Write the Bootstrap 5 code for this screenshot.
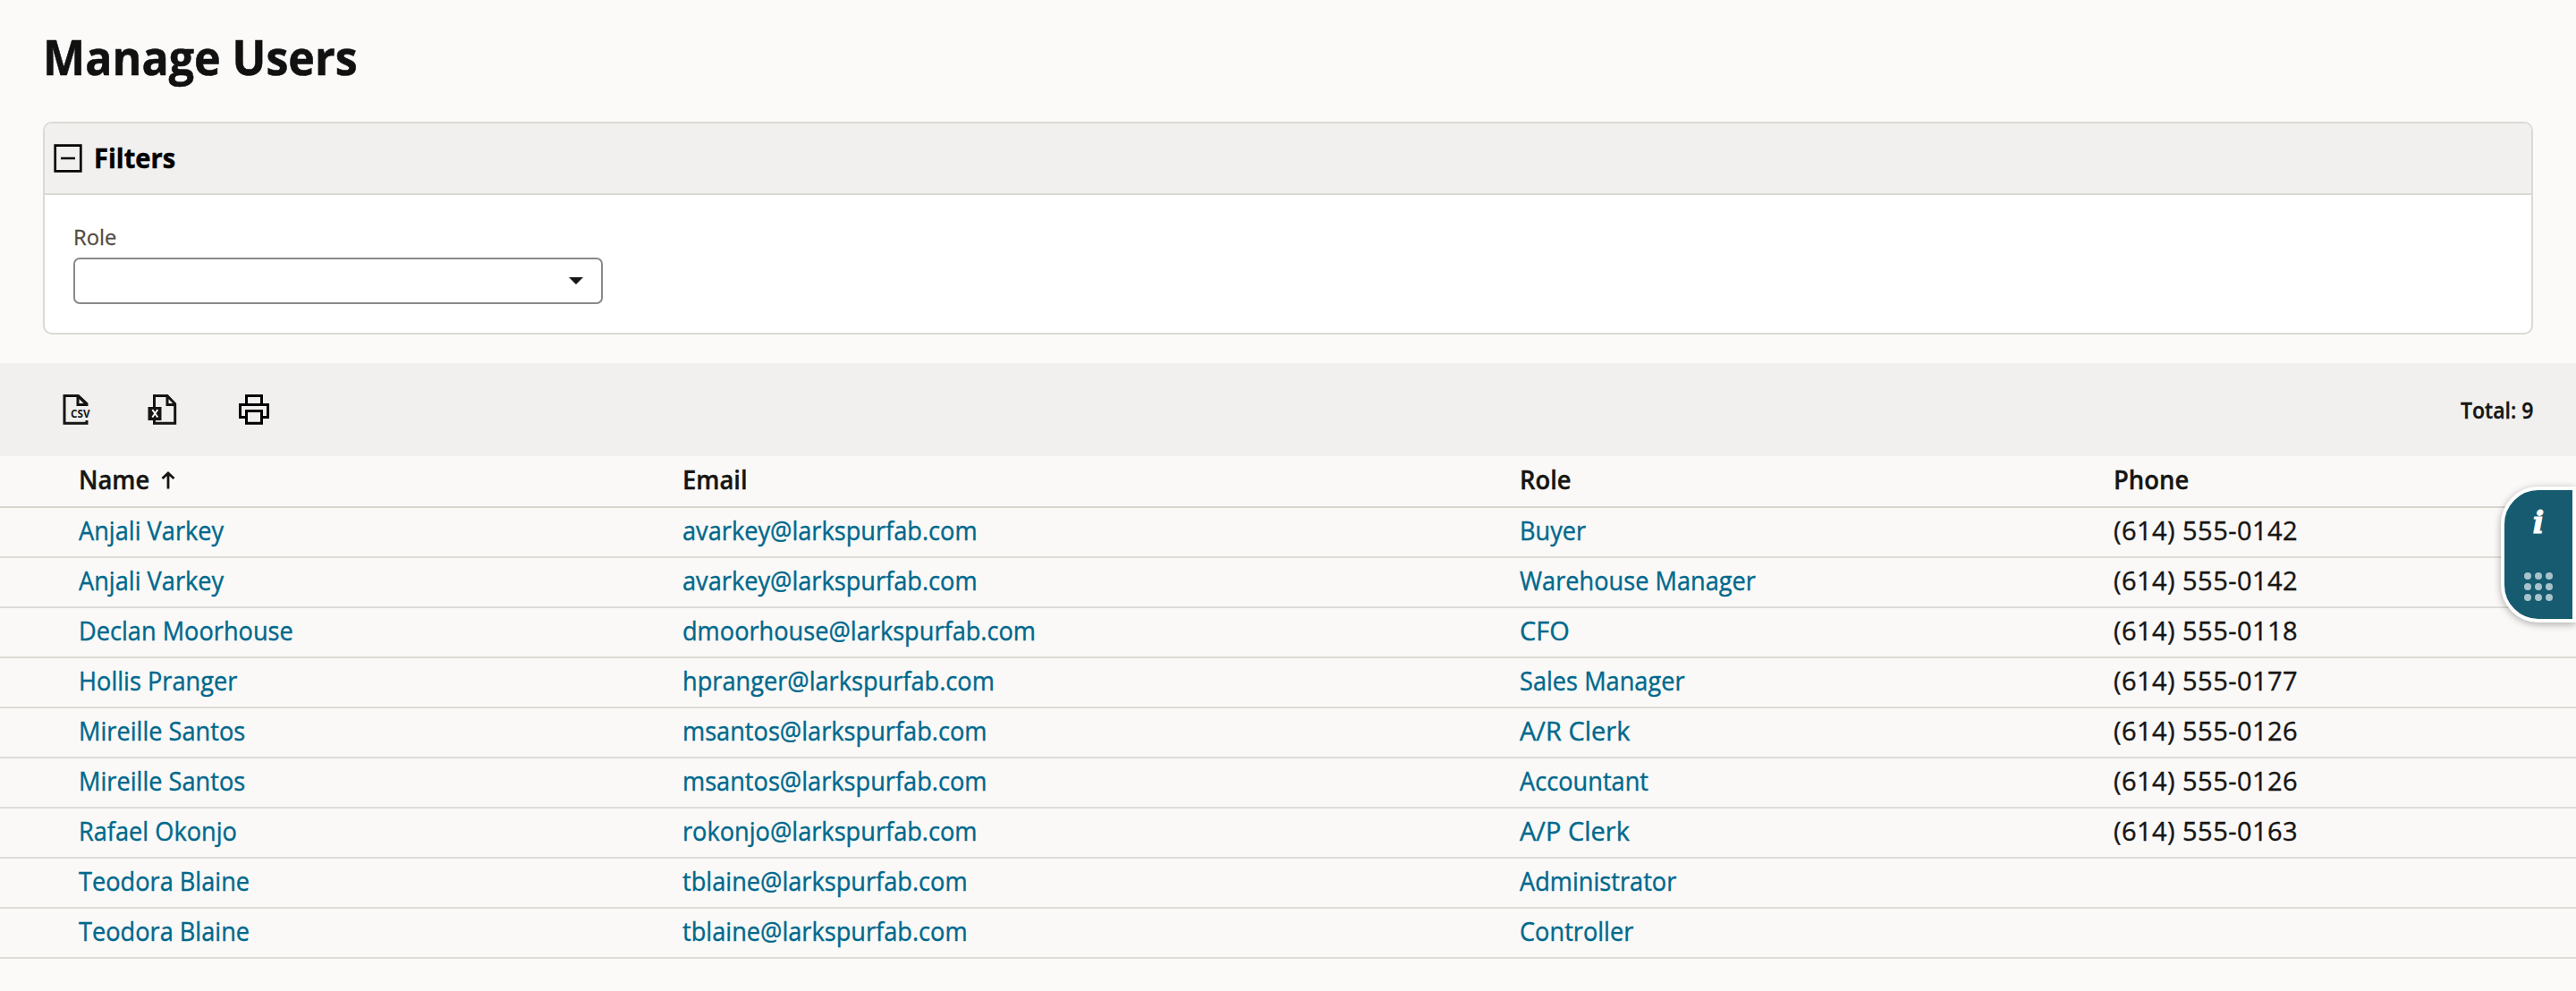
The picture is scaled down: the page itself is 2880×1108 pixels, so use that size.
<!DOCTYPE html>
<html lang="en">
<head>
<meta charset="utf-8">
<title>Manage Users</title>
<link rel="stylesheet" href="https://cdn.jsdelivr.net/npm/bootstrap@5.3.0/dist/css/bootstrap.min.css">
<style>
body{background:#fbfaf8;color:#161513;font-family:"Open Sans","Noto Sans",sans-serif;font-size:29px;overflow:hidden}
/* slightly condensed text */
.narrow{display:inline-block;transform:scaleX(var(--w,.937));transform-origin:left center}
.w-full{--w:1}
.page-title{font-size:54.5px;font-weight:700;line-height:64px;padding:31px 48px 0;height:136px;color:#111;--w:.919;-webkit-text-stroke:.6px #111}
.filter-card{margin:0 48px;height:238px;border:2px solid #dbd9d4;border-radius:10px;background:#fff;overflow:hidden}
.filter-head{height:80px;background:#f1f0ee;border-bottom:2px solid #dbd9d4;padding-left:10px;gap:13px;color:#000;font-weight:700;font-size:31px;-webkit-text-stroke:.5px #000}
.filter-head .narrow{padding-bottom:2px}
.filter-body{padding:30px 32px 0}
.filter-label{font-size:24.5px;line-height:34px;color:#4f4b46;display:block;margin-bottom:6px;--w:.97;-webkit-text-stroke:.3px #4f4b46}
.role-select{width:592px;height:52px;border:2px solid #8b8988;border-radius:7px;background:#fff;padding:0 20px}
.toolbar{height:104px;margin-top:32px;background:#f1f0ee;padding:0 48px}
.total-count{font-size:25px;font-weight:600;--w:.92;transform-origin:right center;padding-top:2px;-webkit-text-stroke:.4px #161513}
.user-table{table-layout:fixed;width:100%;background:#faf9f8;border-collapse:separate;border-spacing:0;-webkit-text-stroke:.4px}
.user-table th,.user-table td{padding:0 0 5px;height:56px;line-height:40px;border-bottom:2px solid #dddcd6;vertical-align:middle;white-space:nowrap}
.user-table th{height:58px;padding-bottom:4px;font-weight:600;border-color:#d6d5cd}
.user-table th:first-child,.user-table td:first-child{padding-left:88px}
.user-table a{color:#00688c;text-decoration:none}
.user-table td.phone-cell{letter-spacing:.45px}
.user-table thead .narrow{--w:.945}
.sort-arrow{vertical-align:baseline;margin-left:8px}
.side-tab{right:0;top:544px;width:84px;height:152px;background:#165b70;border:4px solid #fff;border-radius:42px 0 0 42px;box-shadow:0 2px 8px rgba(0,0,0,.32)}
.info-glyph{font:italic 700 34px/40px "DejaVu Serif",serif;color:#fff;margin-top:16px;-webkit-text-stroke:.8px #fff}
.dot-grid{margin-bottom:20px}
</style>
</head>
<body>
<h1 class="page-title mb-0"><span class="narrow">Manage Users</span></h1>
<section class="filter-card">
  <div class="filter-head d-flex align-items-center">
    <svg width="32" height="32" viewBox="0 0 32 32" fill="none" stroke="#000" stroke-width="2.7"><path d="M1.7 1.7h28.6v28.6H1.7zM8 16h16"/></svg>
    <span class="narrow">Filters</span>
  </div>
  <div class="filter-body">
    <label class="filter-label"><span class="narrow">Role</span></label>
    <div class="role-select d-flex align-items-center justify-content-end"><svg width="16" height="8"><path d="M0 0h16L8 8z" fill="#161513"/></svg></div>
  </div>
</section>
<div class="toolbar d-flex align-items-center justify-content-between">
  <svg width="280" height="40" viewBox="48 438 280 40" fill="none" stroke="#161513" stroke-width="3">
    <path d="M97 454v-2.500L87.500 442.500H72V473.300H97V470M87 442v10.500H97M87 442.500l10 10"/>
    <text x="79" y="466.500" font-family="Open Sans" font-size="11.500" font-weight="700" fill="#161513" stroke="none" textLength="21.500" lengthAdjust="spacingAndGlyphs">CSV</text>
    <path d="M172.500 455V442.500H187L195.700 451.500V473.300H172.500V468M187 442v10.500H196"/>
    <path d="M165.500 455h15v15h-15z" fill="#161513" stroke="none"/>
    <path d="M170.300 458l6 8.500M176.300 458l-6 8.500" stroke="#fff" stroke-width="2"/>
    <path d="M275.500 452.500v-10h17v10M274 466.500h-5.500v-14h31v14H294M275.500 459.500h17v13.800h-17z" stroke="#000"/>
  </svg>
  <span class="total-count narrow">Total: 9</span>
</div>
<table class="user-table">
  <colgroup><col style="width:763px"><col style="width:936px"><col style="width:664px"><col></colgroup>
  <thead><tr><th><span class="narrow">Name</span><svg class="sort-arrow" width="16" height="20" viewBox="0 0 16 20" fill="none" stroke="#161513" stroke-width="2.800"><path d="M8 19.500V2M1.500 8L8 2l6.500 6"/></svg></th><th><span class="narrow">Email</span></th><th><span class="narrow">Role</span></th><th><span class="narrow">Phone</span></th></tr></thead>
  <tbody>
    <tr><td><a class="narrow" href="#">Anjali Varkey</a></td><td><a class="narrow" href="#">avarkey@larkspurfab.com</a></td><td><a class="narrow" href="#">Buyer</a></td><td class="phone-cell">(614) 555-0142</td></tr>
    <tr><td><a class="narrow" href="#">Anjali Varkey</a></td><td><a class="narrow" href="#">avarkey@larkspurfab.com</a></td><td><a class="narrow" href="#">Warehouse Manager</a></td><td class="phone-cell">(614) 555-0142</td></tr>
    <tr><td><a class="narrow" href="#">Declan Moorhouse</a></td><td><a class="narrow" href="#">dmoorhouse@larkspurfab.com</a></td><td><a class="narrow w-full" href="#">CFO</a></td><td class="phone-cell">(614) 555-0118</td></tr>
    <tr><td><a class="narrow" href="#">Hollis Pranger</a></td><td><a class="narrow" href="#">hpranger@larkspurfab.com</a></td><td><a class="narrow" href="#">Sales Manager</a></td><td class="phone-cell">(614) 555-0177</td></tr>
    <tr><td><a class="narrow" href="#">Mireille Santos</a></td><td><a class="narrow" href="#">msantos@larkspurfab.com</a></td><td><a class="narrow w-full" href="#">A/R Clerk</a></td><td class="phone-cell">(614) 555-0126</td></tr>
    <tr><td><a class="narrow" href="#">Mireille Santos</a></td><td><a class="narrow" href="#">msantos@larkspurfab.com</a></td><td><a class="narrow" href="#">Accountant</a></td><td class="phone-cell">(614) 555-0126</td></tr>
    <tr><td><a class="narrow" href="#">Rafael Okonjo</a></td><td><a class="narrow" href="#">rokonjo@larkspurfab.com</a></td><td><a class="narrow w-full" href="#">A/P Clerk</a></td><td class="phone-cell">(614) 555-0163</td></tr>
    <tr><td><a class="narrow" href="#">Teodora Blaine</a></td><td><a class="narrow" href="#">tblaine@larkspurfab.com</a></td><td><a class="narrow" href="#">Administrator</a></td><td></td></tr>
    <tr><td><a class="narrow" href="#">Teodora Blaine</a></td><td><a class="narrow" href="#">tblaine@larkspurfab.com</a></td><td><a class="narrow" href="#">Controller</a></td><td></td></tr>
  </tbody>
</table>
<aside class="side-tab position-absolute d-flex flex-column align-items-center">
  <span class="info-glyph">i</span>
  <svg class="dot-grid mt-auto" width="32" height="32" viewBox="0 0 32 32" fill="#a8c3cc"><circle cx="4" cy="4" r="4"/><circle cx="16" cy="4" r="4"/><circle cx="28" cy="4" r="4"/><circle cx="4" cy="16" r="4"/><circle cx="16" cy="16" r="4"/><circle cx="28" cy="16" r="4"/><circle cx="4" cy="28" r="4"/><circle cx="16" cy="28" r="4"/><circle cx="28" cy="28" r="4"/></svg>
</aside>
<script src="https://cdn.jsdelivr.net/npm/bootstrap@5.3.0/dist/js/bootstrap.bundle.min.js"></script>
</body>
</html>
